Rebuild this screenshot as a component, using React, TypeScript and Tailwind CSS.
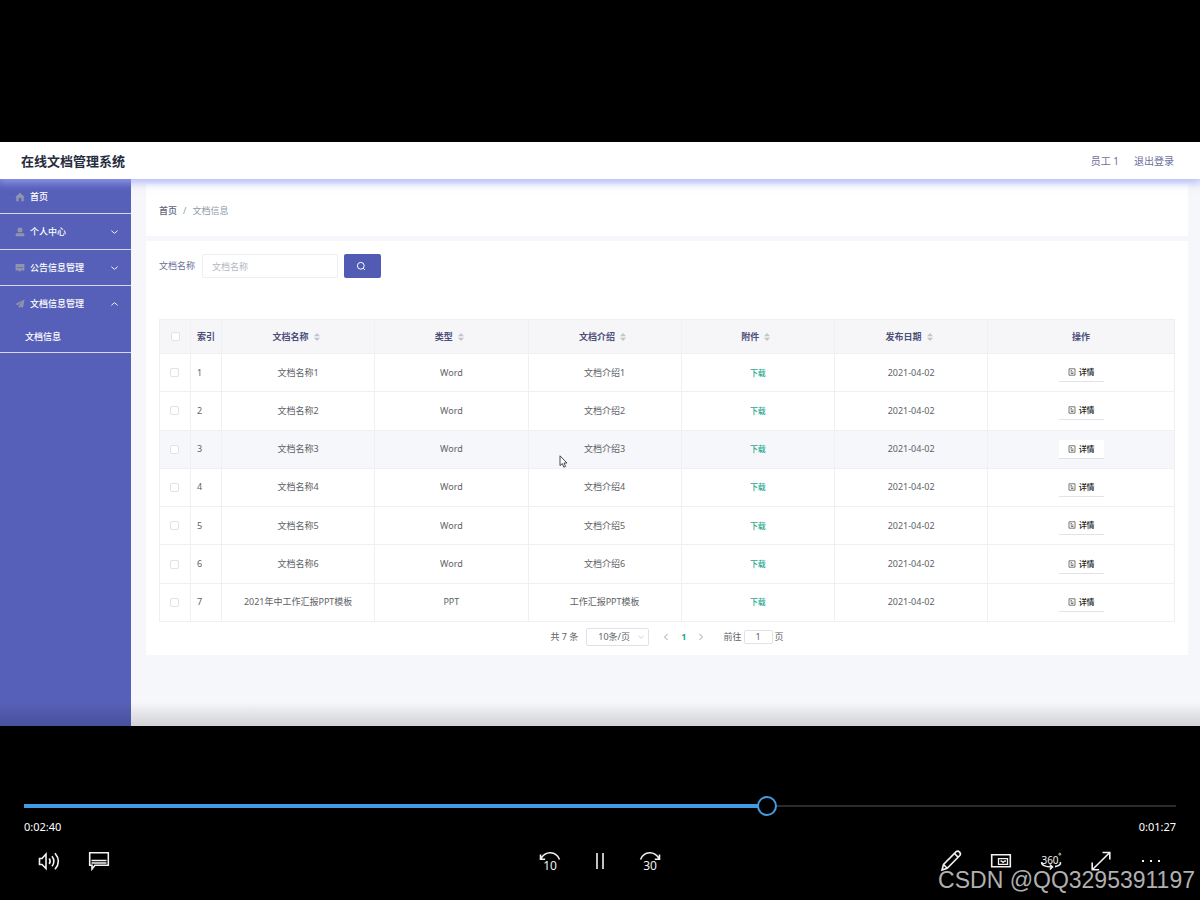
import React, { useState } from 'react';
import type { ReactNode } from 'react';

interface DocRow {
  id: number;
  name: string;
  type: string;
  intro: string;
  date: string;
}

const ROWS: DocRow[] = [
  { id: 1, name: '文档名称1', type: 'Word', intro: '文档介绍1', date: '2021-04-02' },
  { id: 2, name: '文档名称2', type: 'Word', intro: '文档介绍2', date: '2021-04-02' },
  { id: 3, name: '文档名称3', type: 'Word', intro: '文档介绍3', date: '2021-04-02' },
  { id: 4, name: '文档名称4', type: 'Word', intro: '文档介绍4', date: '2021-04-02' },
  { id: 5, name: '文档名称5', type: 'Word', intro: '文档介绍5', date: '2021-04-02' },
  { id: 6, name: '文档名称6', type: 'Word', intro: '文档介绍6', date: '2021-04-02' },
  { id: 7, name: '2021年中工作汇报PPT模板', type: 'PPT', intro: '工作汇报PPT模板', date: '2021-04-02' },
];

const SORTABLE = ['文档名称', '类型', '文档介绍', '附件', '发布日期'];
const HOVERED_ROW = 3;
const DURATION = 247;

function Chevron({ dir, className }: { dir: 'up' | 'down' | 'left' | 'right'; className: string }) {
  const d = {
    up: 'M1.5 5.5 L5 2.5 L8.5 5.5',
    down: 'M1.5 2.5 L5 5.5 L8.5 2.5',
    left: 'M6.5 1 L3.5 4 L6.5 7',
    right: 'M3.5 1 L6.5 4 L3.5 7',
  }[dir];
  return (
    <svg viewBox="0 0 10 8" className={className} fill="none" stroke="currentColor">
      <path d={d} />
    </svg>
  );
}

function SortIcon() {
  return (
    <svg viewBox="0 0 6 8" className="h-2 w-[6px] shrink-0 fill-[#c0c4cc]">
      <path d="M3 0 L6 3.3 H0Z M3 8 L6 4.7 H0Z" />
    </svg>
  );
}

function HomeIcon() {
  return (
    <svg viewBox="0 0 10 10" className="size-[10px] fill-[#8f95ad]">
      <path d="M5 0.8 L9.6 5 L8.8 5.6 V9.3 H6.3 V6.2 Q5 5.2 3.7 6.2 V9.3 H1.2 V5.6 L0.4 5Z" />
    </svg>
  );
}

function UserIcon() {
  return (
    <svg viewBox="0 0 10 10" className="size-[10px] fill-[#8f95ad]">
      <circle cx="5" cy="3" r="2.5" />
      <path d="M0.7 9.3 V7.6 Q0.7 6.2 2.2 6.2 H7.8 Q9.3 6.2 9.3 7.6 V9.3Z" />
    </svg>
  );
}

function ChatIcon() {
  return (
    <svg viewBox="0 0 10 10" className="size-[10px]">
      <path d="M0.6 1 H9.4 V7.6 H5.6 L4 9.2 V7.6 H0.6Z" fill="#8f95ad" />
      <path d="M2.4 4 h1.2 v1.1 h-1.2z M4.4 4 h1.2 v1.1 h-1.2z M6.4 4 h1.2 v1.1 h-1.2z" fill="#5660b8" />
    </svg>
  );
}

function PlaneIcon() {
  return (
    <svg viewBox="0 0 10 10" className="size-[10px] fill-[#8f95ad]">
      <path d="M9.6 0.6 L0.4 5 L2.8 6.3 L7.8 2.4 L3.7 6.8 L3.8 9.6 L5.2 7.6 L7.9 8.8Z" />
    </svg>
  );
}

interface MenuItemProps {
  icon: ReactNode;
  label: string;
  arrow?: 'up' | 'down';
}

function MenuItem({ icon, label, arrow }: MenuItemProps) {
  return (
    <button className="flex h-[35px] w-full items-center gap-[5px] pr-3 pl-[15px] text-left">
      {icon}
      <span className="flex-1">{label}</span>
      {arrow && <Chevron dir={arrow} className="h-2 w-[9px]" />}
    </button>
  );
}

function Sidebar() {
  return (
    <nav className="w-[131px] shrink-0 bg-[#5660b8] text-[9px] leading-3 font-medium text-white">
      <ul>
        <li className="border-b border-[#d5d8f0]">
          <a href="#home" className="flex h-[34px] items-center gap-[5px] pt-px pl-[15px]">
            <HomeIcon />
            首页
          </a>
        </li>
        <li className="border-b border-[#d5d8f0]"><MenuItem icon={<UserIcon />} label="个人中心" arrow="down" /></li>
        <li className="border-b border-[#d5d8f0]"><MenuItem icon={<ChatIcon />} label="公告信息管理" arrow="down" /></li>
        <li className="border-b border-[#d5d8f0]">
          <MenuItem icon={<PlaneIcon />} label="文档信息管理" arrow="up" />
          <a href="#docs" className="flex h-[31px] items-center pl-[25px]">文档信息</a>
        </li>
      </ul>
    </nav>
  );
}

function Checkbox({ label }: { label: string }) {
  return (
    <input
      type="checkbox"
      aria-label={label}
      className="block size-[9px] appearance-none rounded-[2px] border border-[#e0e2e8] bg-white checked:bg-[#5660b8]"
    />
  );
}

function DocTable() {
  return (
    <table className="h-[303px] w-full table-fixed border-collapse text-center text-[9px] leading-3 text-[#606266]">
      <colgroup>
        <col className="w-[31px]" />
        <col className="w-[31px]" />
        {SORTABLE.map((c) => <col key={c} className="w-[15.1%]" />)}
        <col />
      </colgroup>
      <thead className="bg-[#f6f6f9] font-bold text-[#4c4f78]">
        <tr className="h-[34px]">
          <th className="border border-[#eff0f4] pl-[11px]"><Checkbox label="全选" /></th>
          <th className="border border-[#eff0f4]">索引</th>
          {SORTABLE.map((c) => (
            <th key={c} className="border border-[#eff0f4] pr-1">
              <button className="inline-flex items-center gap-[5px] align-middle font-bold">{c}<SortIcon /></button>
            </th>
          ))}
          <th className="border border-[#eff0f4]">操作</th>
        </tr>
      </thead>
      <tbody>
        {ROWS.map((row) => (
          <tr key={row.id} className={row.id === HOVERED_ROW ? 'bg-[#f5f7fb]' : 'bg-white'}>
            <td className="border border-[#eff0f4] pl-[10px]"><Checkbox label={row.name} /></td>
            <td className="border border-[#eff0f4] pl-[6px] text-left">{row.id}</td>
            <td className="border border-[#eff0f4]">{row.name}</td>
            <td className="border border-[#eff0f4]">{row.type}</td>
            <td className="border border-[#eff0f4]">{row.intro}</td>
            <td className="border border-[#eff0f4]">
              <a href="#download" className="text-[8px] font-medium text-[#27a78f]">下载</a>
            </td>
            <td className="border border-[#eff0f4]">{row.date}</td>
            <td className="border border-[#eff0f4]">
              <button className="inline-flex h-[19px] w-[45px] items-center justify-center gap-[3px] border-b border-[#e2e3e8] bg-white align-middle text-[8px] font-medium text-[#222]">
                <svg viewBox="0 0 8 8" className="size-2" fill="none" stroke="#555" strokeWidth="0.8">
                  <path d="M1 0.8 H7 V7.2 H1Z M2.5 2.6 H4 M2.5 4 H5.5 M3 5.5 H5.5" />
                </svg>
                详情
              </button>
            </td>
          </tr>
        ))}
      </tbody>
    </table>
  );
}

function Pagination() {
  return (
    <div className="flex h-[29px] items-center justify-center text-[9px] leading-3 text-[#606266]">
      <span>共 7 条</span>
      <div className="relative ml-2">
        <select aria-label="每页条数" className="block h-[18px] w-[63px] appearance-none rounded-[2px] border border-[#e0e2e8] bg-white pl-[11px]">
          <option>10条/页</option>
        </select>
        <Chevron dir="down" className="pointer-events-none absolute top-[6px] right-1 h-[6px] w-2 text-[#c0c4cc]" />
      </div>
      <button aria-label="上一页" className="ml-3"><Chevron dir="left" className="h-2 w-[10px] text-[#a0a4ac]" /></button>
      <button className="mx-[10px] font-bold text-[#27a78f]">1</button>
      <button aria-label="下一页"><Chevron dir="right" className="h-2 w-[10px] text-[#a0a4ac]" /></button>
      <label className="ml-[17px] flex items-center gap-[2px]">
        前往
        <input defaultValue="1" className="h-[14px] w-[29px] rounded-[2px] border border-[#e0e2e8] text-center" />
        页
      </label>
    </div>
  );
}

function DocSystem() {
  return (
    <section className="relative flex h-[584px] flex-col overflow-hidden bg-[#f6f7fa]">
      <header className="relative z-10 flex h-[37px] items-center justify-between bg-white pr-[26px] pl-[21px] shadow-[0_2px_8px_2px_rgba(160,170,250,0.75)]">
        <h1 className="text-[13px] leading-4 font-bold text-[#252c3d]">在线文档管理系统</h1>
        <div className="flex gap-[15px] text-[10px] leading-4 text-[#6c709a]">
          <span>员工 1</span>
          <a href="#logout">退出登录</a>
        </div>
      </header>
      <div className="flex flex-1">
        <Sidebar />
        <main className="flex min-w-0 flex-1 flex-col gap-[5px] pt-[5px] pr-3 pl-[15px]">
          <div className="flex h-[52px] items-center gap-[6px] bg-white pt-px pl-[13px] text-[9px] leading-3 text-[#8f9bab]">
            <a href="#home" className="font-medium text-[#5d6480]">首页</a>
            <span>/</span>
            <span>文档信息</span>
          </div>
          <div className="bg-white px-[13px] pt-[13px] pb-1">
            <form className="mb-[41px] flex items-center text-[9px] leading-3" onSubmit={(e) => e.preventDefault()}>
              <label htmlFor="doc-name" className="text-[#6c709a]">文档名称</label>
              <input
                id="doc-name"
                placeholder="文档名称"
                className="ml-[7px] h-6 w-[136px] rounded-[2px] border border-[#ebeef5] px-[9px] placeholder:text-[#b4b8c2]"
              />
              <button aria-label="查询" className="ml-[6px] flex h-6 w-[37px] items-center justify-center rounded-[2px] bg-[#515bb4] pr-1">
                <svg viewBox="0 0 10 10" className="size-[10px]" fill="none" stroke="#fff">
                  <circle cx="4.8" cy="4.8" r="3.4" />
                  <path d="M7.2 7.2 L9 9" />
                </svg>
              </button>
            </form>
            <DocTable />
            <Pagination />
          </div>
        </main>
      </div>
      {/* mouse pointer over the table */}
      <svg viewBox="0 0 9 13" className="absolute top-[313px] left-[559px] h-[13px] w-[9px]">
        <path d="M1 0.8 V10.6 L3.3 8.6 L4.9 12.2 L6.6 11.4 L5 8 H8Z" fill="#fff" stroke="#333" strokeWidth="0.9" />
      </svg>
      {/* scrim of the player controls */}
      <div className="pointer-events-none absolute inset-x-0 bottom-0 h-6 bg-linear-to-b from-transparent to-black/15" />
    </section>
  );
}

function ControlButton({ label, children }: { label: string; children: ReactNode }) {
  return (
    <button aria-label={label} className="flex h-10 w-[50px] items-center justify-center">
      <svg viewBox="0 0 24 24" className="size-6 overflow-visible" fill="none" stroke="#f2f2f2" strokeWidth="1.6">
        {children}
      </svg>
    </button>
  );
}

function Player() {
  const [time, setTime] = useState(160);

  return (
    <footer className="relative px-6 pt-[68px] pb-4 text-white">
      <div className="relative flex h-6 items-center">
        <div className="h-[2px] w-full bg-[#2b2b2b]" />
        <div className="absolute left-0 h-1 bg-[#429ce3]" style={{ width: `${(time / DURATION) * 100}%` }} />
        <input
          type="range"
          aria-label="播放进度"
          min={0}
          max={DURATION}
          value={time}
          onChange={(e) => setTime(Number(e.target.value))}
          className="absolute inset-x-0 h-5 w-full appearance-none bg-transparent [&::-webkit-slider-thumb]:size-5 [&::-webkit-slider-thumb]:appearance-none [&::-webkit-slider-thumb]:rounded-full [&::-webkit-slider-thumb]:border-2 [&::-webkit-slider-thumb]:border-[#429ce3] [&::-webkit-slider-thumb]:bg-black"
        />
      </div>
      <div className="flex justify-between pt-px text-[11px] leading-4">
        <span>0:02:40</span>
        <span>0:01:27</span>
      </div>
      <div className="mt-[6px] grid grid-cols-3">
        <div className="flex">
          <ControlButton label="音量">
            <path d="M2.5 9.5 H5 L9 5 V19.5 L5 15.5 H2.5Z" />
            <path d="M12.2 9.5 Q14.2 12.3 12.2 15 M15 7.2 Q18.8 12.3 15 17.3 M18 4.2 Q24.8 12.3 18 20.3" />
          </ControlButton>
          <ControlButton label="字幕">
            <path d="M2.7 3.7 H21.3 V16.3 H8 L5 20 V16.3 H2.7Z M4.5 11.5 H19.5 M4.5 14 H19.5" />
          </ControlButton>
        </div>
        <div className="flex justify-center">
          <ControlButton label="后退 10 秒">
            <path d="M2.5 5.5 V10.2 H7.2 M2.8 10 C7 1.5 18 1.5 21.5 10.5" />
            <text x="12" y="21" textAnchor="middle" fontSize="12" fill="#f2f2f2" stroke="none">10</text>
          </ControlButton>
          <ControlButton label="暂停">
            <path d="M9 4 V20 M15 4 V20" />
          </ControlButton>
          <ControlButton label="前进 30 秒">
            <path d="M21.5 5.5 V10.2 H16.8 M21.2 10 C17 1.5 6 1.5 2.5 10.5" />
            <text x="12" y="21" textAnchor="middle" fontSize="12" fill="#f2f2f2" stroke="none">30</text>
          </ControlButton>
        </div>
        <div className="flex justify-end">
          <ControlButton label="编辑">
            <path d="M3 21 L4.5 15.5 L17.2 2.7 Q18.8 1.5 20.6 3.1 Q22.2 4.9 20.8 6.5 L8.2 19.3Z M15.5 4.5 L19 8.1 M4.5 15.5 L8.2 19.3" />
          </ControlButton>
          <ControlButton label="画中画">
            <path d="M2.7 5.7 H21.3 V17.8 H2.7Z" />
            <path d="M9.5 9.7 H18.5 V15.3 H9.5Z M11.5 12 h1 l1.5 1.4 l2 -1.4 h1" strokeWidth="1.3" />
          </ControlButton>
          <ControlButton label="360 度">
            <text x="11" y="14.5" textAnchor="middle" fontSize="10" fill="#f2f2f2" stroke="none">360</text>
            <circle cx="20.8" cy="5.2" r="1" strokeWidth="0.8" />
            <path d="M2.7 13 Q2.2 17.8 13 18 M10.8 15.5 L13.5 18 L10.8 20.5 M16 17.6 Q22.5 16.5 21.3 13" />
          </ControlButton>
          <ControlButton label="全屏">
            <path d="M3.5 20.5 L20.5 3.8 M13.5 3.5 H20.8 V10.5 M3.2 13.5 V20.8 H10.2" />
          </ControlButton>
          <ControlButton label="更多">
            <path d="M3 12 h2 M11 12 h2 M19 12 h2" strokeWidth="2" />
          </ControlButton>
        </div>
      </div>
      <div className="pointer-events-none absolute right-[5px] bottom-[7px] text-[23px] leading-5 text-[#b0b0b0] [font-family:'Liberation_Sans',sans-serif]">
        CSDN @QQ3295391197
      </div>
    </footer>
  );
}

export default function App() {
  return (
    <div lang="zh-CN" className="min-h-screen bg-black pt-[142px] [font-family:'Noto_Sans','Noto_Sans_CJK_SC',sans-serif]">
      <DocSystem />
      <Player />
    </div>
  );
}
